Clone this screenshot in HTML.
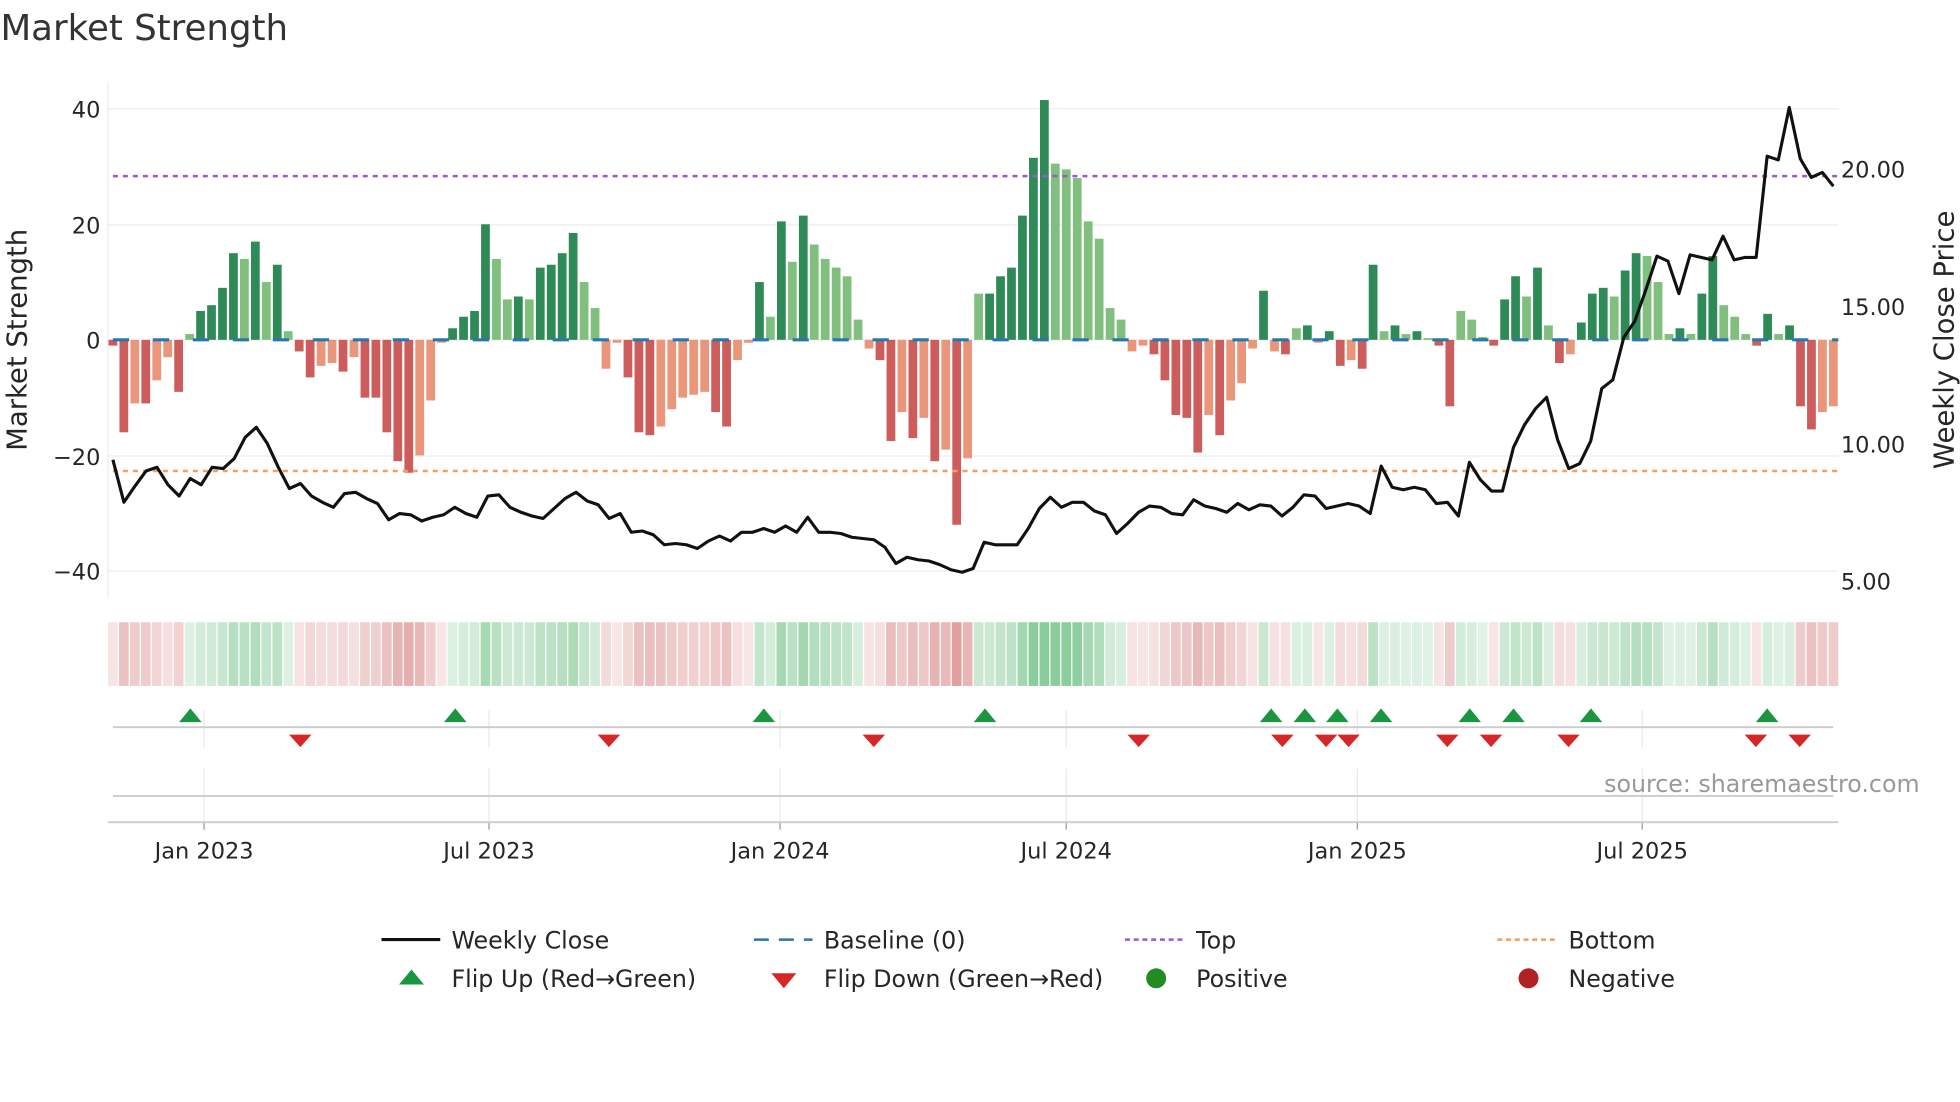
<!DOCTYPE html>
<html><head><meta charset="utf-8"><style>
html,body{margin:0;padding:0;background:#fff;width:1960px;height:1102px;overflow:hidden}
svg{display:block}
text{font-family:"DejaVu Sans","Liberation Sans",sans-serif;fill:#262626}
</style></head><body>
<svg id="s" width="1960" height="1102" viewBox="0 0 1568 882" xmlns="http://www.w3.org/2000/svg">
<text x="0" y="32" font-size="28.5" style="fill:#333">Market Strength</text>
<g id="grid"></g>
<g id="heat"></g>
<g id="bars"></g>
<line x1="90" y1="141" x2="1471" y2="141" stroke="#9b59d0" stroke-width="2" stroke-dasharray="4,4"/>
<line x1="90" y1="377" x2="1471" y2="377" stroke="#f0a060" stroke-width="2" stroke-dasharray="4,4"/>
<line x1="90" y1="272" x2="1471" y2="272" stroke="#2a78a8" stroke-width="2.5" stroke-dasharray="13,19"/>
<polyline id="price" fill="none" stroke="#111" stroke-width="2.5" stroke-linejoin="round"/>
<g id="marks"></g>
<g font-size="18">
<text x="80" y="94" text-anchor="end">40</text>
<text x="80" y="187" text-anchor="end">20</text>
<text x="80" y="279" text-anchor="end">0</text>
<text x="80" y="372" text-anchor="end">−20</text>
<text x="80" y="464" text-anchor="end">−40</text>
<text x="1473" y="142">20.00</text>
<text x="1473" y="252">15.00</text>
<text x="1473" y="362">10.00</text>
<text x="1473" y="472">5.00</text>
<text x="163" y="687" text-anchor="middle">Jan 2023</text>
<text x="391" y="687" text-anchor="middle">Jul 2023</text>
<text x="624" y="687" text-anchor="middle">Jan 2024</text>
<text x="853" y="687" text-anchor="middle">Jul 2024</text>
<text x="1086" y="687" text-anchor="middle">Jan 2025</text>
<text x="1314" y="687" text-anchor="middle">Jul 2025</text>
</g>
<text transform="translate(21,272) rotate(-90)" font-size="22" text-anchor="middle">Market Strength</text>
<text transform="translate(1563,272) rotate(-90)" font-size="22" text-anchor="middle">Weekly Close Price</text>
<text x="1536" y="634" font-size="19" style="fill:#999" text-anchor="end">source: sharemaestro.com</text>
<g font-size="19">
<line x1="305" y1="752" x2="352" y2="752" stroke="#111" stroke-width="2.5"/><text x="361" y="759">Weekly Close</text>
<line x1="603" y1="752" x2="650" y2="752" stroke="#2a78a8" stroke-width="2" stroke-dasharray="12,8"/><text x="659" y="759">Baseline (0)</text>
<line x1="900" y1="752" x2="947" y2="752" stroke="#9b59d0" stroke-width="2" stroke-dasharray="4,3"/><text x="957" y="759">Top</text>
<line x1="1198" y1="752" x2="1245" y2="752" stroke="#f0a060" stroke-width="2" stroke-dasharray="4,3"/><text x="1255" y="759">Bottom</text>
<polygon points="319,788 339,788 329,776" fill="#1a9641"/><text x="361" y="790">Flip Up (Red→Green)</text>
<polygon points="617,779 637,779 627,791" fill="#d62728"/><text x="659" y="790">Flip Down (Green→Red)</text>
<circle cx="925" cy="783" r="8" fill="#228b22"/><text x="957" y="790">Positive</text>
<circle cx="1223" cy="783" r="8" fill="#b22222"/><text x="1255" y="790">Negative</text>
</g>
</svg>
<script>
var NS="http://www.w3.org/2000/svg";
function el(p,t,a){var e=document.createElementNS(NS,t);for(var k in a)e.setAttribute(k,a[k]);document.getElementById(p).appendChild(e);return e;}
var v=[-1,-16,-11,-11,-7,-3,-9,1,5,6,9,15,14,17,10,13,1.5,-2,-6.5,-4.5,-4,-5.5,-3,-10,-10,-16,-21,-23,-20,-10.5,-0.5,2,4,5,20,14,7,7.5,7,12.5,13,15,18.5,10,5.5,-5,-0.5,-6.5,-16,-16.5,-15,-12,-10,-9.5,-9,-12.5,-15,-3.5,-0.5,10,4,20.5,13.5,21.5,16.5,14,12.5,11,3.5,-1.5,-3.5,-17.5,-12.5,-17,-13.5,-21,-19,-32,-20.5,8,8,11,12.5,21.5,31.5,41.5,30.5,29.5,28,20.5,17.5,5.5,3.5,-2,-1,-2.5,-7,-13,-13.5,-19.5,-13,-16.5,-10.5,-7.5,-1.5,8.5,-2,-2.5,2,2.5,-0.5,1.5,-4.5,-3.5,-5,13,1.5,2.5,1,1.5,0.3,-1,-11.5,5,3.5,0.5,-1,7,11,7.5,12.5,2.5,-4,-2.5,3,8,9,7.5,12,15,14.5,10,1,2,1,8,14.5,6,4,1,-1,4.5,1,2.5,-11.5,-15.5,-12.5,-11.5];
var n=v.length,x0=90,x1=1467,dx=(x1-x0)/(n-1);
[87,180,272,365,457].forEach(function(y){el("grid","line",{x1:86,x2:1471,y1:y,y2:y,stroke:"#eee","stroke-width":1});});
el("grid","line",{x1:86,x2:86,y1:65,y2:478,stroke:"#eee","stroke-width":1});
[163,391,624,853,1086,1314].forEach(function(x){
 el("grid","line",{x1:x,x2:x,y1:568,y2:598,stroke:"#e6e9ee","stroke-width":1});
 el("grid","line",{x1:x,x2:x,y1:615,y2:658,stroke:"#e6e9ee","stroke-width":1});
 el("grid","line",{x1:x,x2:x,y1:658,y2:664,stroke:"#999","stroke-width":1});
});
el("grid","line",{x1:90,x2:1467,y1:582,y2:582,stroke:"#ccc","stroke-width":1.5});
el("grid","line",{x1:90,x2:1467,y1:637,y2:637,stroke:"#ccc","stroke-width":1.5});
el("grid","line",{x1:86,x2:1471,y1:658,y2:658,stroke:"#ccc","stroke-width":1.5});
for(var i=0;i<n;i++){
 var x=x0+i*dx,val=v[i],prev=i?v[i-1]:0,dark=Math.abs(val)>=Math.abs(prev);
 var col=val>=0?(dark?"#2e8b57":"#80bf7e"):(dark?"#cd5c5c":"#e9967a");
 var y=272-val*4.625;
 el("bars","rect",{x:x-3.5,width:7,y:Math.min(y,272),height:Math.max(Math.abs(val)*4.625,1),fill:col});
 var a=Math.min(1,0.25+Math.abs(val)/40);
 var hc=val>=0?"rgba(60,170,90,"+(a*0.6)+")":"rgba(200,80,80,"+(a*0.55)+")";
 el("heat","rect",{x:x-dx/2+0.5,width:dx-1,y:498,height:51,fill:hc});
}
var py=[368,402,389,377,374,388,397,383,388,374,375,367,350,342,355,374,391,387,397,402,406,395,394,399,403,416,411,412,417,414,412,406,411,414,397,396,406,410,413,415,407,399,394,401,404,415,411,426,425,428,436,435,436,439,433,429,433,426,426,423,426,421,426,414,426,426,427,430,431,432,438,451,446,448,449,452,456,458,455,434,436,436,436,423,407,398,406,402,402,409,412,427,419,410,405,406,411,412,400,405,407,410,403,408,404,405,413,406,396,397,407,405,403,405,411,373,390,392,390,392,403,402,413,370,384,393,393,358,340,327,318,352,375,371,353,311,304,270,257,232,205,209,235,204,206,208,189,208,206,206,125,128,86,127,142,138,149];
var m=py.length,pdx=(x1-x0)/(m-1),pts=[];
for(var j=0;j<m;j++)pts.push((x0+j*pdx).toFixed(1)+","+py[j]);
document.getElementById("price").setAttribute("points",pts.join(" "));
[152,364,611,788,1017,1044,1070,1105,1176,1211,1273,1414].forEach(function(x){el("marks","polygon",{points:(x-9)+",578 "+(x+9)+",578 "+x+",567",fill:"#1a9641"});});
[240,487,699,911,1026,1061,1079,1158,1193,1255,1405,1440].forEach(function(x){el("marks","polygon",{points:(x-9)+",588 "+(x+9)+",588 "+x+",598",fill:"#d62728"});});
</script>
</body></html>
